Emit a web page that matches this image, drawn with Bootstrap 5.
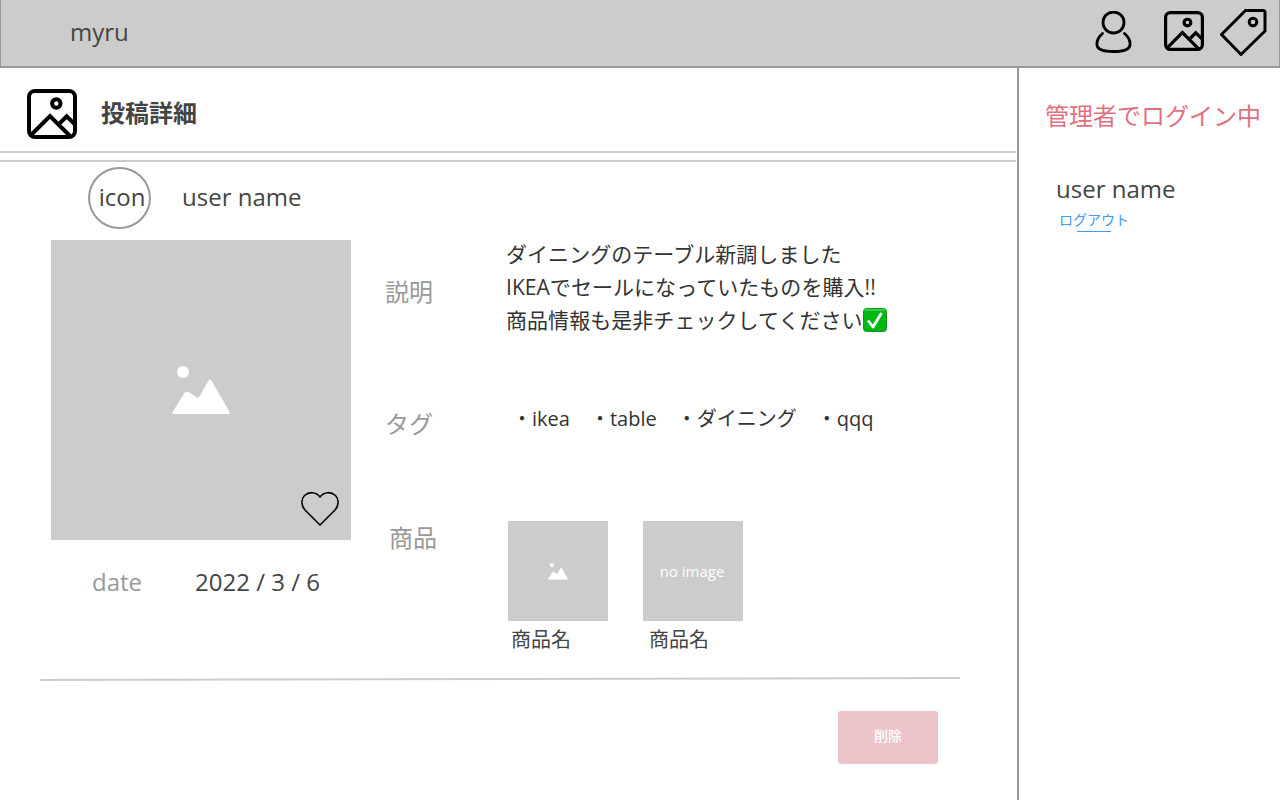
<!DOCTYPE html>
<html lang="ja">
<head>
<meta charset="utf-8">
<meta name="viewport" content="width=device-width, initial-scale=1">
<title>myru 投稿詳細</title>
<link href="https://cdn.jsdelivr.net/npm/bootstrap@5.3.0/dist/css/bootstrap.min.css" rel="stylesheet">
<style>
body { font-family: "Open Sans", "Noto Sans CJK JP", sans-serif; font-size: 24px; line-height: 32px; color: #444; background: #fff; }
svg { display: block; flex: none; }
.jp { font-family: "Noto Sans CJK JP", sans-serif; }
.topbar { height: 68px; background: #ccc; border: solid #999; border-width: 0 1px 2px 1px; padding: 0 12px 3px 69px; }
.icon-stroke { fill: none; stroke: #000; stroke-linecap: round; stroke-linejoin: round; }
.content-pane { width: 1017px; }
.page-title { height: 83px; padding: 21px 0 0 27px; gap: 24px; }
.page-title h1 { font-size: 24px; line-height: 32px; margin-top: 7px; }
.double-rule { width: 1016px; height: 11px; border: solid #ccc; border-width: 2px 0; }
.poster { height: 78px; padding: 5px 0 0 88px; gap: 31px; }
.avatar { width: 63px; height: 62px; border: 2px solid #999; padding: 0 0 3px 5px; }
.photo-col { width: 300px; margin-left: 51px; }
.photo { height: 300px; background: #ccc; }
.heart { right: 11px; bottom: 14px; }
.date-row { padding: 26px 0 0 41px; gap: 53px; }
.muted-label { color: #999; }
.details { margin-left: 34px; }
.detail-label { width: 121px; }
.row-text { height: 163px; }
.row-tags { height: 118px; }
.desc { font-size: 21px; line-height: 33px; color: #333; margin-top: -2px; white-space: nowrap; letter-spacing: .05px; }
.tags { font-size: 20px; line-height: 32px; color: #333; margin: 0 0 0 6px; white-space: nowrap; }
.check { display: inline-block; vertical-align: -4px; }
.products { gap: 35px; margin-left: 2px; }
.thumb { width: 100px; height: 100px; background: #ccc; font-size: 15px; }
.product-name { font-size: 20px; line-height: 32px; margin-top: 2px; padding-left: 3px; }
.delete-btn { width: 100px; height: 53px; border-radius: 3px; background: #ecc4ca; color: #fff; font-size: 14px; line-height: 20px; padding: 0 0 6px; border: 0; margin: 30px 79px 0 auto; }
.side { width: 263px; border-left: 2px solid #999; padding: 31px 0 0 26px; }
.admin-note { color: #e0707f; white-space: nowrap; }
.logout { color: #409af7; font-size: 14px; line-height: 20px; }
.logout-line { width: 34px; height: 1px; background: #409af7; margin: 2px 0 0 18px; }
</style>
</head>
<body>
<svg class="d-none" aria-hidden="true">
  <symbol id="picture" viewBox="0 0 50 50">
    <rect x="2" y="2" width="46" height="46" rx="6" stroke-width="4"/>
    <circle cx="29.300" cy="14.500" r="4.200" stroke-width="4"/>
    <path d="M4 46 23 27 43 47M32 35 39.700 27.300 48 35.500" stroke-width="4" stroke-linejoin="miter"/>
  </symbol>
  <symbol id="mountains" viewBox="0 0 58 49">
    <circle cx="11" cy="6" r="6"/>
    <path d="M1 48Q0 48 .5 46L12.500 27Q14.500 24.500 16.500 26L25 31.500Q26.500 32 27.500 30.500L36.500 14.500Q38 12.500 39.500 14.500L57.500 46Q58 48 57 48Z"/>
  </symbol>
</svg>
<header class="topbar d-flex align-items-center justify-content-between">
  <span class="brand-name">myru</span>
  <nav class="d-flex align-items-center">
    <svg class="icon-stroke" style="margin-right:32px" width="37" height="42" viewBox="0 0 37 42" stroke-width="2.800"><circle cx="18.500" cy="11.500" r="10.500"/><path d="M7.500 22.500C3.500 26 1.500 30 2 34 2.500 38.500 9 40.500 18.500 40.500S34.500 38.500 35 34C35.500 30 33.500 26 29.500 22.500"/></svg>
    <svg class="icon-stroke" style="margin:0 15px 1px 0" width="40" height="40"><use href="#picture"/></svg>
    <svg class="icon-stroke" width="48" height="48" viewBox="0 0 48 48" stroke-width="3"><path d="M2.500 26.500 26.500 2.500H44Q46 2.500 46 4.500V23L22 46.500Z"/><circle cx="34" cy="14" r="3.800"/></svg>
  </nav>
</header>
<div class="d-flex" style="height:732px">
  <main class="content-pane d-flex flex-column">
    <div class="page-title d-flex">
      <svg class="icon-stroke" width="50" height="50"><use href="#picture"/></svg>
      <h1 class="jp fw-bold mb-0">投稿詳細</h1>
    </div>
    <div class="double-rule"></div>
    <div class="poster d-flex">
      <div class="avatar rounded-circle d-flex align-items-center justify-content-center"><span>icon</span></div>
      <div class="poster-name" style="padding-top:14px">user name</div>
    </div>
    <div class="d-flex" style="height:437px">
      <div class="photo-col">
        <div class="photo position-relative d-flex align-items-center justify-content-center">
          <svg width="58" height="49" fill="#fff"><use href="#mountains"/></svg>
          <svg class="heart icon-stroke position-absolute" width="40" height="36" viewBox="0 0 40 36" stroke-width="1.600"><path d="M20 35 5 20C1 16 1 9 4.500 5.500 9 1.500 16 1.500 20 7 24 1.500 31 1.500 35.500 5.500 39 9 39 16 35 20Z"/></svg>
        </div>
        <div class="date-row d-flex"><span class="muted-label">date</span><span>2022 / 3 / 6</span></div>
      </div>
      <div class="details">
        <div class="row-text d-flex">
          <div class="detail-label muted-label jp" style="padding-top:35px">説明</div>
          <div class="desc">ダイニングのテーブル新調しました<br>IKEAでセールになっていたものを購入!!<br>商品情報も是非チェックしてください<svg class="check" width="24" height="24" viewBox="0 0 24 24" role="img" aria-label="チェック"><rect x=".5" y=".5" width="23" height="23" rx="3" fill="#00b714" stroke="#139622"/><path d="M2 2H22" stroke="#45d85b" stroke-width="1.500"/><path d="M5 12.500 10 19 18.500 5" fill="none" stroke="#fff" stroke-width="2.800" stroke-linejoin="round"/></svg></div>
        </div>
        <div class="row-tags d-flex">
          <div class="detail-label muted-label jp" style="padding-top:4px">タグ</div>
          <p class="tags">・ikea　・table　・ダイニング　・qqq</p>
        </div>
        <div class="d-flex">
          <div class="detail-label muted-label jp" style="padding:0 0 0 4px">商品</div>
          <div class="products d-flex">
            <div>
              <div class="thumb d-flex align-items-center justify-content-center"><svg width="20" height="17" fill="#fff"><use href="#mountains"/></svg></div>
              <div class="product-name jp">商品名</div>
            </div>
            <div>
              <div class="thumb d-flex align-items-center justify-content-center text-white" style="padding-right:2px">no image</div>
              <div class="product-name jp" style="padding-left:6px">商品名</div>
            </div>
          </div>
        </div>
      </div>
    </div>
    <svg width="920" height="4" viewBox="0 0 920 4" style="margin-left:40px"><path d="M0 3 920 1" stroke="#ccc" stroke-width="2"/></svg>
    <button type="button" class="btn delete-btn jp fw-medium">削除</button>
  </main>
  <aside class="side">
    <div class="admin-note jp">管理者でログイン中</div>
    <div class="side-user" style="margin:42px 0 0 11px">user name</div>
    <div style="margin:4px 0 0 14px"><a class="logout jp d-block text-decoration-none" href="#">ログアウト</a><div class="logout-line"></div></div>
  </aside>
</div>
<script src="https://cdn.jsdelivr.net/npm/bootstrap@5.3.0/dist/js/bootstrap.bundle.min.js"></script>
</body>
</html>
